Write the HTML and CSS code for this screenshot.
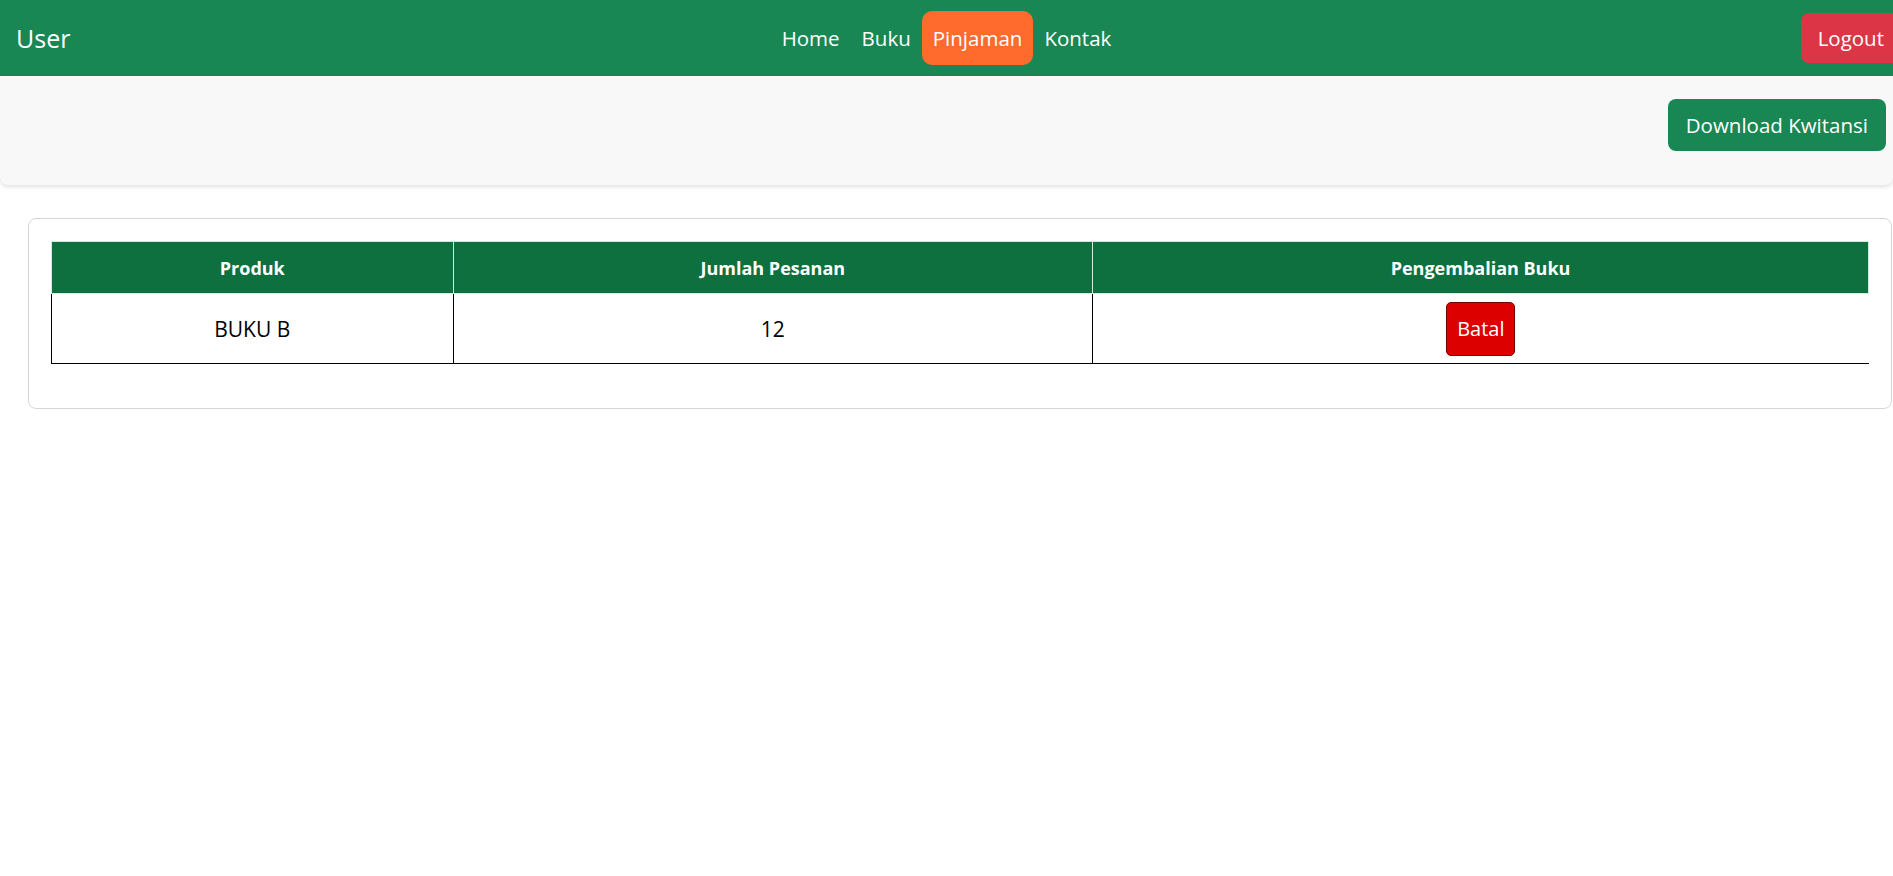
FILE: index.html
```html
<!DOCTYPE html>
<html lang="id">
<head>
<meta charset="utf-8">
<title>Pinjaman</title>
<link rel="stylesheet" href="styles.css">
</head>
<body>
<nav class="navbar">
  <div class="brand">User</div>
  <ul class="nav-links">
    <li><a class="nav-link" href="#">Home</a></li>
    <li><a class="nav-link" href="#">Buku</a></li>
    <li><a class="nav-link active" href="#">Pinjaman</a></li>
    <li><a class="nav-link" href="#">Kontak</a></li>
  </ul>
  <div class="nav-right"><a class="btn-logout" href="#">Logout</a></div>
</nav>
<div class="toolbar">
  <a class="btn-download" href="#">Download Kwitansi</a>
</div>
<div class="card">
  <table class="orders">
    <thead>
      <tr>
        <th class="col-produk">Produk</th>
        <th class="col-jumlah">Jumlah Pesanan</th>
        <th class="col-kembali">Pengembalian Buku</th>
      </tr>
    </thead>
    <tbody>
      <tr>
        <td>BUKU B</td>
        <td>12</td>
        <td class="last"><button class="btn-batal" type="button">Batal</button></td>
      </tr>
    </tbody>
  </table>
</div>
</body>
</html>
```
FILE: styles.css
```css
* { box-sizing: border-box; }
html, body { margin: 0; padding: 0; }
body {
  font-family: "Open Sans", "Noto Sans", "Liberation Sans", sans-serif;
  background: #fff;
  color: #000;
  overflow-x: hidden;
}
a { text-decoration: none; }

.navbar {
  height: 76px;
  background: #198754;
  display: grid;
  grid-template-columns: 1fr auto 1fr;
  align-items: center;
  overflow: hidden;
}
.brand {
  color: #fff;
  font-size: 25px;
  line-height: 30px;
  margin-left: 16px;
}
.nav-links {
  list-style: none;
  margin: 0;
  padding: 0;
  display: flex;
  align-items: center;
}
.nav-link {
  display: block;
  color: #fff;
  font-size: 20.5px;
  line-height: 30px;
  padding: 12px 11px;
  border-radius: 10px;
}
.nav-link.active { background: #ff6b2c; }
.nav-right {
  display: flex;
  justify-content: flex-end;
}
.btn-logout {
  display: block;
  background: #dc3545;
  color: #fff;
  font-size: 20.5px;
  line-height: 30px;
  padding: 10px 17px;
  border-radius: 8px;
  margin-right: -8px;
}

.toolbar {
  height: 109px;
  background: #f8f8f8;
  border-radius: 0 0 8px 8px;
  box-shadow: 0 2px 4px rgba(0,0,0,0.12);
  display: flex;
  justify-content: flex-end;
  align-items: flex-start;
  padding: 23px 7px 0 0;
}
.btn-download {
  display: block;
  background: #198754;
  color: #fff;
  font-size: 20.5px;
  line-height: 28px;
  padding: 12px 18px;
  border-radius: 8px;
}

.card {
  margin: 33px 1px 0 28px;
  border: 1px solid #d6d6d6;
  border-radius: 8px;
  padding: 22px 22px 44px 22px;
}
.orders {
  width: 100%;
  border-collapse: collapse;
  table-layout: fixed;
}
.orders th {
  background: #0e6f3f;
  color: #fff;
  font-weight: 700;
  font-size: 18px;
  height: 52px;
  border: 1px solid #cdeedc;
  text-align: center;
  padding: 0 8px;
}
.col-produk { width: 22.1%; }
.col-jumlah { width: 35.2%; }
.col-kembali { width: 42.7%; }
.orders td {
  height: 70px;
  text-align: center;
  font-size: 21px;
  border-left: 1px solid #000;
  border-bottom: 1px solid #000;
  padding: 0 8px;
  vertical-align: middle;
}
.btn-batal {
  font-family: inherit;
  background: #dd0000;
  color: #fff;
  font-size: 20px;
  line-height: 28px;
  padding: 12px 10px;
  border: 1px solid #7a0000;
  border-radius: 5px;
  cursor: pointer;
}
```
